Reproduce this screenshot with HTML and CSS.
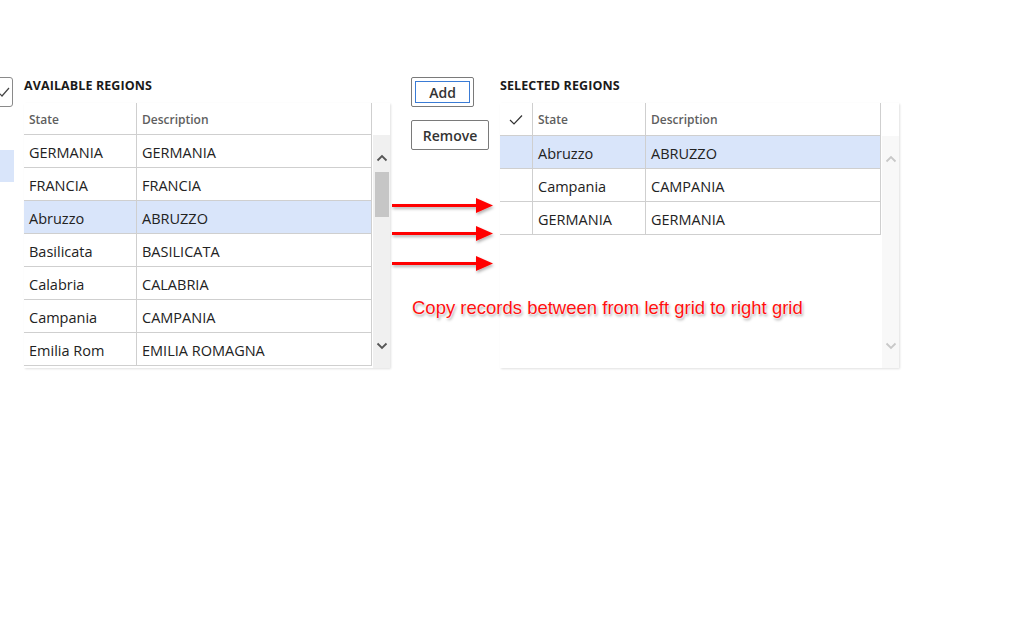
FILE: index.html
```html
<!DOCTYPE html>
<html>
<head>
<meta charset="utf-8">
<link rel="stylesheet" href="styles.css">
</head>
<body>
<div class="page">
  <div class="stub">
    <div class="stub-check">
      <svg width="12" height="12" viewBox="0 0 12 12"><path d="M1 7 L4 10 L11 2" fill="none" stroke="#444" stroke-width="1.2"/></svg>
    </div>
    <div class="stub-sel"></div>
  </div>

  <div class="panel panel-left">
    <div class="title">AVAILABLE REGIONS</div>
    <div class="grid grid-left">
      <div class="head">
        <div class="hc c-state">State</div>
        <div class="hc c-desc">Description</div>
        <div class="hc c-sb"></div>
      </div>
      <div class="body">
        <div class="rows">
          <div class="row"><div class="c c-state">GERMANIA</div><div class="c c-desc">GERMANIA</div></div>
          <div class="row"><div class="c c-state">FRANCIA</div><div class="c c-desc">FRANCIA</div></div>
          <div class="row sel"><div class="c c-state">Abruzzo</div><div class="c c-desc">ABRUZZO</div></div>
          <div class="row"><div class="c c-state">Basilicata</div><div class="c c-desc">BASILICATA</div></div>
          <div class="row"><div class="c c-state">Calabria</div><div class="c c-desc">CALABRIA</div></div>
          <div class="row"><div class="c c-state">Campania</div><div class="c c-desc">CAMPANIA</div></div>
          <div class="row"><div class="c c-state">Emilia Rom</div><div class="c c-desc">EMILIA ROMAGNA</div></div>
        </div>
        <div class="sb sb-dark">
          <svg class="chev" width="12" height="8" viewBox="0 0 12 8"><path d="M1.5 6.5 L6 2 L10.5 6.5" fill="none" stroke="currentColor" stroke-width="1.8"/></svg>
          <div class="thumb"></div>
          <div class="sb-fill"></div>
          <svg class="chev" width="12" height="8" viewBox="0 0 12 8"><path d="M1.5 1.5 L6 6 L10.5 1.5" fill="none" stroke="currentColor" stroke-width="1.8"/></svg>
        </div>
      </div>
    </div>
  </div>

  <div class="actions">
    <button class="btn btn-focus"><span>Add</span></button>
    <button class="btn">Remove</button>
  </div>

  <div class="panel panel-right">
    <div class="title">SELECTED REGIONS</div>
    <div class="grid grid-right">
      <div class="head">
        <div class="hc c-chk">
          <svg width="14" height="12" viewBox="0 0 14 12"><path d="M1 6 L5 10 L13 1.5" fill="none" stroke="#333" stroke-width="1.2"/></svg>
        </div>
        <div class="hc c-state2">State</div>
        <div class="hc c-desc2">Description</div>
        <div class="hc c-sb"></div>
      </div>
      <div class="body">
        <div class="rows">
          <div class="row sel"><div class="c c-chk"></div><div class="c c-state2">Abruzzo</div><div class="c c-desc2">ABRUZZO</div></div>
          <div class="row"><div class="c c-chk"></div><div class="c c-state2">Campania</div><div class="c c-desc2">CAMPANIA</div></div>
          <div class="row"><div class="c c-chk"></div><div class="c c-state2">GERMANIA</div><div class="c c-desc2">GERMANIA</div></div>
        </div>
        <div class="sb sb-light">
          <svg class="chev" width="12" height="8" viewBox="0 0 12 8"><path d="M1.5 6.5 L6 2 L10.5 6.5" fill="none" stroke="currentColor" stroke-width="1.8"/></svg>
          <div class="sb-fill"></div>
          <svg class="chev" width="12" height="8" viewBox="0 0 12 8"><path d="M1.5 1.5 L6 6 L10.5 1.5" fill="none" stroke="currentColor" stroke-width="1.8"/></svg>
        </div>
      </div>
    </div>
  </div>

  <svg class="arrows" width="110" height="80" viewBox="0 0 110 80">
    <defs>
      <filter id="sh" x="-10%" y="-50%" width="130%" height="200%">
        <feDropShadow dx="1" dy="2" stdDeviation="1.5" flood-color="#000" flood-opacity="0.3"/>
      </filter>
    </defs>
    <g fill="#ff0000" filter="url(#sh)">
      <rect x="2" y="8" width="88" height="3"/>
      <polygon points="86,2 103,9.5 86,17"/>
      <rect x="2" y="36" width="88" height="3"/>
      <polygon points="86,30 103,37.5 86,45"/>
      <rect x="2" y="66" width="88" height="3"/>
      <polygon points="86,60 103,67.5 86,75"/>
    </g>
  </svg>
  <div class="note">Copy records between from left grid to right grid</div>
</div>
</body>
</html>
```
FILE: styles.css
```css
html, body {
  margin: 0;
  padding: 0;
  background: #ffffff;
}
body {
  font-family: "Open Sans", "Noto Sans", sans-serif;
  color: #222;
}
.page {
  position: relative;
  display: flex;
  align-items: flex-start;
  padding-top: 77px;
  width: 1023px;
  height: 619px;
  box-sizing: border-box;
}
.stub {
  width: 14px;
  overflow: hidden;
  flex: none;
  margin-right: 10px;
}
.stub-check {
  width: 30px;
  height: 30px;
  margin-left: -17px;
  border: 1px solid #8a8a8a;
  border-radius: 3px;
  box-sizing: border-box;
  display: flex;
  align-items: center;
  justify-content: flex-end;
  padding-right: 2px;
}
.stub-sel {
  height: 32px;
  margin-top: 43px;
  background: #d9e5fa;
}
.panel {
  flex: none;
  display: flex;
  flex-direction: column;
}
.title {
  font-size: 12.5px;
  font-weight: 700;
  line-height: 16px;
  height: 26px;
  padding-top: 1px;
  box-sizing: border-box;
  color: #1a1a1a;
  letter-spacing: 0.1px;
}
.grid {
  display: flex;
  flex-direction: column;
  box-shadow: 1px 1px 2px rgba(0, 0, 0, 0.12);
}
.panel-left .grid { width: 366px; }
.panel-right .grid { width: 399px; }
.head {
  display: flex;
  height: 32px;
}
.grid-right .head { height: 33px; }
.hc {
  box-sizing: border-box;
  font-size: 12px;
  font-weight: 600;
  color: #5e5e5e;
  display: flex;
  align-items: center;
  padding-left: 5px;
  padding-top: 1px;
  border-bottom: 1px solid #cfcfcf;
  border-right: 1px solid #cfcfcf;
}
.hc.c-sb {
  border: none;
}
.c-state { width: 113px; }
.c-desc { width: 235px; }
.c-chk { width: 33px; justify-content: center; padding-left: 0; }
.c-state2 { width: 113px; }
.c-desc2 { width: 235px; }
.c-sb { width: 18px; flex: none; }
.body {
  display: flex;
  height: 233px;
  overflow: hidden;
}
.grid-right .body {
  height: 232px;
}
.rows {
  display: flex;
  flex-direction: column;
}
.grid-right .rows {
  border-left: 1px solid #f0f0f0;
  margin-left: -1px;
}
.row {
  display: flex;
  height: 33px;
  flex: none;
}
.row.sel {
  background: #d9e5fa;
}
.c {
  box-sizing: border-box;
  font-size: 14.5px;
  color: #222;
  display: flex;
  align-items: center;
  padding-left: 5px;
  padding-top: 2px;
  border-bottom: 1px solid #cfcfcf;
  border-right: 1px solid #cfcfcf;
  white-space: nowrap;
  overflow: hidden;
}
.c.c-chk { padding-left: 0; }
.sb {
  width: 18px;
  flex: none;
  display: flex;
  flex-direction: column;
  align-items: center;
  margin-left: 1px;
}
.sb-dark {
  background: #f0f0f0;
  color: #555;
}
.sb-light {
  background: #f8f8f8;
  color: #c8c8c8;
}
.chev {
  flex: none;
  margin-top: 19px;
}
.sb .chev:last-child {
  margin-top: 0;
  margin-bottom: 18px;
}
.thumb {
  width: 14px;
  height: 45px;
  background: #c6c6c6;
  margin-top: 10px;
  flex: none;
}
.sb-fill { flex: 1; }
.actions {
  flex: none;
  width: 110px;
  box-sizing: border-box;
  padding-left: 21px;
  display: flex;
  flex-direction: column;
  align-items: flex-start;
  gap: 13px;
}
.btn {
  font-family: "Open Sans", "Noto Sans", sans-serif;
  font-size: 14px;
  font-weight: 600;
  color: #333;
  background: #fff;
  border: 1px solid #7a7a7a;
  border-radius: 2px;
  height: 30px;
  padding: 0;
  margin: 0;
  box-sizing: border-box;
  display: flex;
  align-items: center;
  justify-content: center;
}
.btn-focus {
  width: 63px;
  padding: 3px;
}
.btn-focus span {
  display: flex;
  align-items: center;
  justify-content: center;
  width: 100%;
  height: 100%;
  border: 1px solid #3a7bd5;
  box-sizing: border-box;
}
.btn:not(.btn-focus) {
  width: 78px;
}
.arrows {
  position: absolute;
  left: 390px;
  top: 196px;
}
.note {
  position: absolute;
  left: 412px;
  top: 297px;
  font-family: "Liberation Sans", Arial, sans-serif;
  font-size: 18.5px;
  color: #ff1010;
  white-space: nowrap;
  text-shadow: 0 0 1px #fff, 0 0 2px #fff, 0 0 2px #fff, 1px 2px 3px rgba(0, 0, 0, 0.4);
}
```
